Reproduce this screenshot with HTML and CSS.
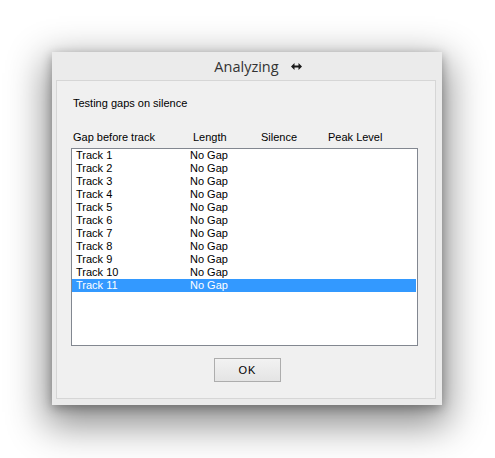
FILE: index.html
```html
<!DOCTYPE html>
<html>
<head>
<meta charset="utf-8">
<title>Analyzing</title>
<link rel="stylesheet" href="styles.css">
</head>
<body>
<div class="window">
  <div class="titlebar">
    <span class="title">Analyzing</span>
    <svg class="cursor" width="11" height="7" viewBox="0 0 11 7">
      <path d="M0 3.5 L3.5 0 L3.5 2.5 L7.5 2.5 L7.5 0 L11 3.5 L7.5 7 L7.5 4.5 L3.5 4.5 L3.5 7 Z" fill="#1a1a1a"/>
    </svg>
  </div>
  <div class="panel">
    <div class="message">Testing gaps on silence</div>
    <div class="columns">
      <span>Gap before track</span>
      <span>Length</span>
      <span>Silence</span>
      <span>Peak Level</span>
    </div>
    <div class="listbox">
      <div class="row"><span class="name">Track 1</span><span>No Gap</span></div>
      <div class="row"><span class="name">Track 2</span><span>No Gap</span></div>
      <div class="row"><span class="name">Track 3</span><span>No Gap</span></div>
      <div class="row"><span class="name">Track 4</span><span>No Gap</span></div>
      <div class="row"><span class="name">Track 5</span><span>No Gap</span></div>
      <div class="row"><span class="name">Track 6</span><span>No Gap</span></div>
      <div class="row"><span class="name">Track 7</span><span>No Gap</span></div>
      <div class="row"><span class="name">Track 8</span><span>No Gap</span></div>
      <div class="row"><span class="name">Track 9</span><span>No Gap</span></div>
      <div class="row"><span class="name">Track 10</span><span>No Gap</span></div>
      <div class="row selected"><span class="name">Track 11</span><span>No Gap</span></div>
    </div>
    <div class="actions">
      <button class="btn">OK</button>
    </div>
  </div>
</div>
</body>
</html>
```
FILE: styles.css
```css
html, body {
  margin: 0;
  padding: 0;
  background: #ffffff;
}

html {
  height: 100%;
}

body {
  min-height: 100%;
  box-sizing: border-box;
  padding: 52px 0 0 52px;
  font-family: "Liberation Sans", Arial, sans-serif;
  font-size: 11px;
  color: #000;
}

.window {
  width: 390px;
  height: 353px;
  box-sizing: border-box;
  background: #ebebeb;
  padding: 0 6px 6px 4px;
  display: flex;
  flex-direction: column;
  box-shadow: 0 14px 36px 6px rgba(0, 0, 0, 0.45), 0 3px 10px rgba(0, 0, 0, 0.3);
}

.titlebar {
  height: 28px;
  position: relative;
  display: flex;
  align-items: center;
  justify-content: center;
  padding-left: 1px;
}

.title {
  font-family: "Open Sans", "Noto Sans", sans-serif;
  font-size: 14.5px;
  color: #333333;
}

.cursor {
  position: absolute;
  left: 235px;
  top: 11px;
}

.panel {
  flex: 1;
  background: #f0f0f0;
  border: 1px solid #d6d6d6;
  padding: 16px 0 0 14px;
  display: flex;
  flex-direction: column;
}

.message {
  height: 13px;
  line-height: 13px;
  padding-left: 2px;
}

.columns {
  margin-top: 21px;
  height: 13px;
  line-height: 13px;
  display: grid;
  grid-template-columns: 120px 68px 67px 1fr;
  padding-left: 2px;
  width: 347px;
  box-sizing: border-box;
}

.listbox {
  margin-top: 4px;
  width: 347px;
  height: 198px;
  box-sizing: border-box;
  border: 1px solid #828790;
  background: #ffffff;
  padding: 0 1px 0 0;
}

.row {
  height: 13px;
  line-height: 13px;
  display: grid;
  grid-template-columns: 114px 1fr;
  padding-left: 4px;
  color: #000;
}

.row.selected {
  background: #3399ff;
  color: #ffffff;
}

.actions {
  margin-top: 12px;
  padding-left: 143px;
}

.btn {
  width: 67px;
  height: 24px;
  box-sizing: border-box;
  border: 1px solid #adadad;
  background: linear-gradient(#f2f2f2, #e4e4e4);
  font-family: "Liberation Sans", Arial, sans-serif;
  font-size: 11px;
  letter-spacing: 1px;
  color: #000;
  padding: 0;
  margin: 0;
}
```
